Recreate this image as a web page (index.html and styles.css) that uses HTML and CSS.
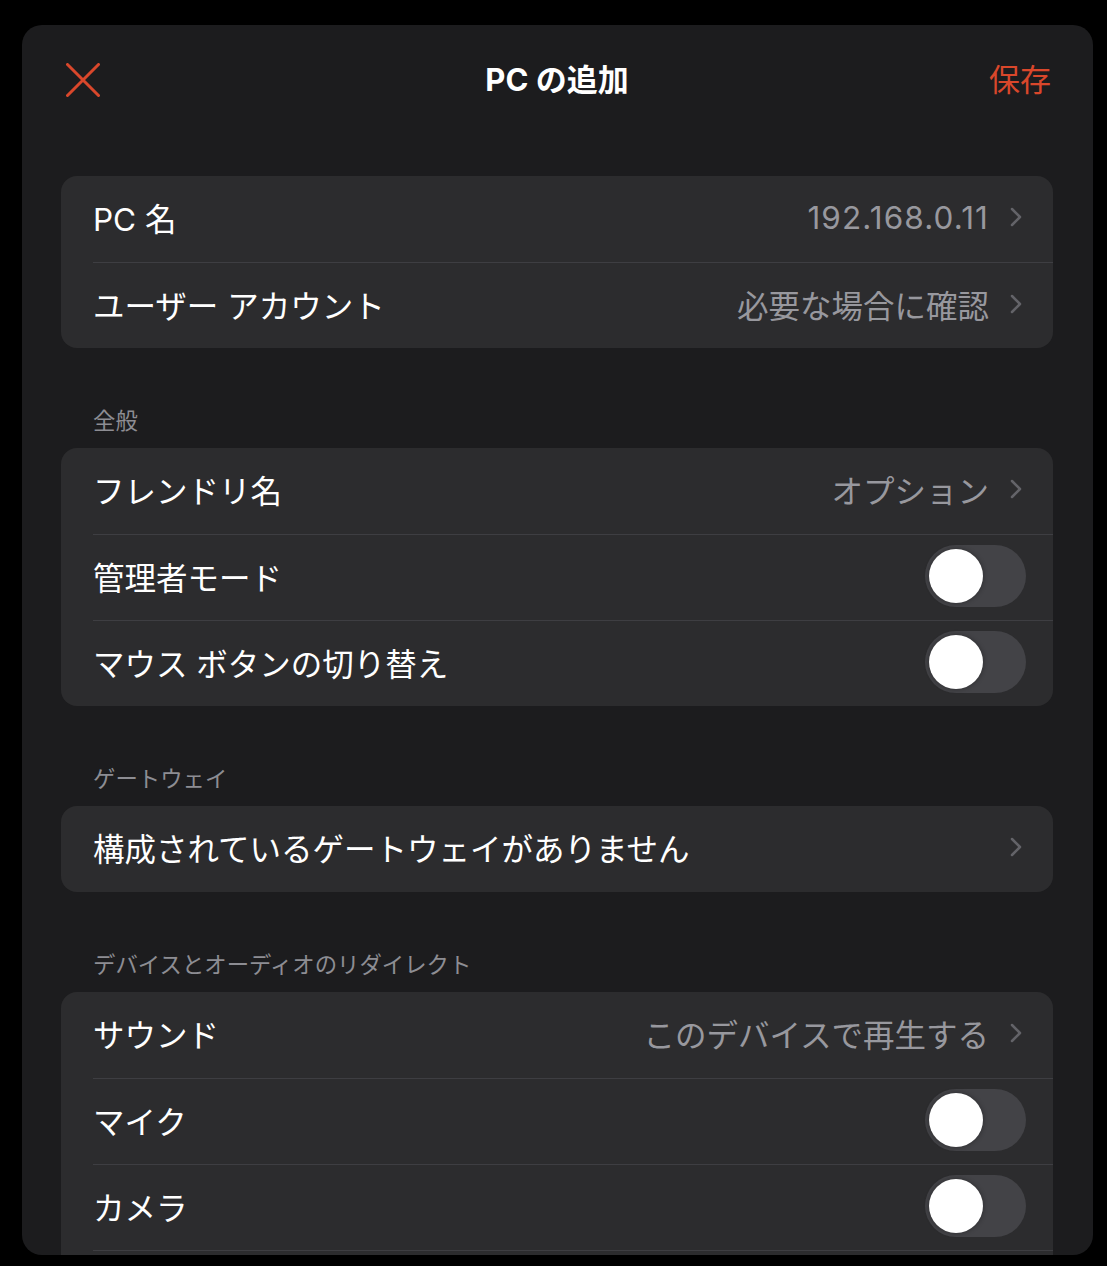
FILE: index.html
```html
<!DOCTYPE html>
<html lang="ja">
<head>
<meta charset="utf-8">
<title>PC の追加</title>
<link rel="stylesheet" href="styles.css">
</head>
<body>
<div class="sheet">
  <header class="nav">
    <button class="nav-close" aria-label="閉じる">
      <svg width="34" height="34" viewBox="0 0 34 34"><path d="M1.5 1.5 L32.5 32.5 M32.5 1.5 L1.5 32.5" stroke="#d9472b" stroke-width="3" stroke-linecap="round" fill="none"/></svg>
    </button>
    <h1 class="nav-title">PC の追加</h1>
    <button class="nav-save">保存</button>
  </header>

  <section class="card">
    <div class="row">
      <div class="row-inner">
        <span class="label">PC 名</span>
        <span class="value num">192.168.0.11</span>
        <svg class="chev" width="12" height="20" viewBox="0 0 12 20"><path d="M2 2 L10 10 L2 18" stroke="#636368" stroke-width="2.5" stroke-linecap="round" stroke-linejoin="round" fill="none"/></svg>
      </div>
    </div>
    <div class="row">
      <div class="row-inner sep">
        <span class="label">ユーザー アカウント</span>
        <span class="value">必要な場合に確認</span>
        <svg class="chev" width="12" height="20" viewBox="0 0 12 20"><path d="M2 2 L10 10 L2 18" stroke="#636368" stroke-width="2.5" stroke-linecap="round" stroke-linejoin="round" fill="none"/></svg>
      </div>
    </div>
  </section>

  <h2 class="section-label">全般</h2>
  <section class="card">
    <div class="row">
      <div class="row-inner">
        <span class="label">フレンドリ名</span>
        <span class="value">オプション</span>
        <svg class="chev" width="12" height="20" viewBox="0 0 12 20"><path d="M2 2 L10 10 L2 18" stroke="#636368" stroke-width="2.5" stroke-linecap="round" stroke-linejoin="round" fill="none"/></svg>
      </div>
    </div>
    <div class="row">
      <div class="row-inner sep toggle-row">
        <span class="label">管理者モード</span>
        <span class="toggle"><span class="knob"></span></span>
      </div>
    </div>
    <div class="row">
      <div class="row-inner sep toggle-row">
        <span class="label">マウス ボタンの切り替え</span>
        <span class="toggle"><span class="knob"></span></span>
      </div>
    </div>
  </section>

  <h2 class="section-label">ゲートウェイ</h2>
  <section class="card">
    <div class="row">
      <div class="row-inner">
        <span class="label">構成されているゲートウェイがありません</span>
        <span class="value"></span>
        <svg class="chev" width="12" height="20" viewBox="0 0 12 20"><path d="M2 2 L10 10 L2 18" stroke="#636368" stroke-width="2.5" stroke-linecap="round" stroke-linejoin="round" fill="none"/></svg>
      </div>
    </div>
  </section>

  <h2 class="section-label">デバイスとオーディオのリダイレクト</h2>
  <section class="card">
    <div class="row">
      <div class="row-inner">
        <span class="label">サウンド</span>
        <span class="value">このデバイスで再生する</span>
        <svg class="chev" width="12" height="20" viewBox="0 0 12 20"><path d="M2 2 L10 10 L2 18" stroke="#636368" stroke-width="2.5" stroke-linecap="round" stroke-linejoin="round" fill="none"/></svg>
      </div>
    </div>
    <div class="row">
      <div class="row-inner sep toggle-row">
        <span class="label">マイク</span>
        <span class="toggle"><span class="knob"></span></span>
      </div>
    </div>
    <div class="row">
      <div class="row-inner sep toggle-row">
        <span class="label">カメラ</span>
        <span class="toggle"><span class="knob"></span></span>
      </div>
    </div>
    <div class="row">
      <div class="row-inner sep toggle-row">
        <span class="label">クリップボード</span>
        <span class="toggle"><span class="knob"></span></span>
      </div>
    </div>
  </section>
</div>
</body>
</html>
```
FILE: styles.css
```css
* { box-sizing: border-box; }
html, body {
  margin: 0;
  padding: 0;
  background: #000;
  height: 100%;
  overflow: hidden;
}
body {
  font-family: "Inter", "Noto Sans CJK JP", sans-serif;
  color: #fff;
}
.sheet {
  margin: 25px 0 0 22px;
  width: 1071px;
  height: 1230px;
  background: #1c1c1e;
  border-radius: 20px;
  overflow: hidden;
  padding: 0 40px 0 39px;
}
.nav {
  height: 110px;
  margin: 0 2px 41px 5px;
  display: flex;
  align-items: center;
  justify-content: space-between;
  position: relative;
}
.nav button {
  background: none;
  border: 0;
  padding: 0;
  font: inherit;
  cursor: pointer;
}
.nav-close {
  width: 34px;
  height: 34px;
  display: flex;
}
.nav-title {
  margin: 0;
  font-size: 31px;
  line-height: 40px;
  font-weight: 700;
  color: #fff;
  position: absolute;
  left: -5px;
  right: -2px;
  text-align: center;
  pointer-events: none;
}
.nav-save {
  color: #d9472b !important;
  font-size: 31px !important;
  line-height: 40px;
  padding-bottom: 5px !important;
}
.card {
  background: #2c2c2e;
  border-radius: 16px;
  overflow: hidden;
}
.row {
  padding-left: 32px;
  height: 86px;
}
.row-inner {
  height: 100%;
  display: flex;
  align-items: center;
  padding-right: 31px;
  padding-bottom: 4px;
}
.row-inner.sep {
  border-top: 1px solid #3e3e42;
}
.row-inner.toggle-row {
  padding-right: 27px;
}
.label {
  font-size: 31.5px;
  color: #fff;
  flex: 1;
  white-space: nowrap;
}
.value {
  font-size: 31.5px;
  color: #98989e;
  margin-right: 21px;
  white-space: nowrap;
}
.value.num {
  letter-spacing: 1.1px;
}
.chev { flex: none; }
.toggle {
  width: 101px;
  height: 62px;
  border-radius: 31px;
  background: #434347;
  padding: 4px;
  display: flex;
}
.knob {
  width: 54px;
  height: 54px;
  border-radius: 50%;
  background: #fff;
  box-shadow: 0 0 4px 1px rgba(0,0,0,0.25);
}
.section-label {
  margin: 0;
  padding: 60px 0 14px 32px;
  font-size: 22.4px;
  line-height: 26px;
  font-weight: 400;
  color: #8d8d93;
}
```
